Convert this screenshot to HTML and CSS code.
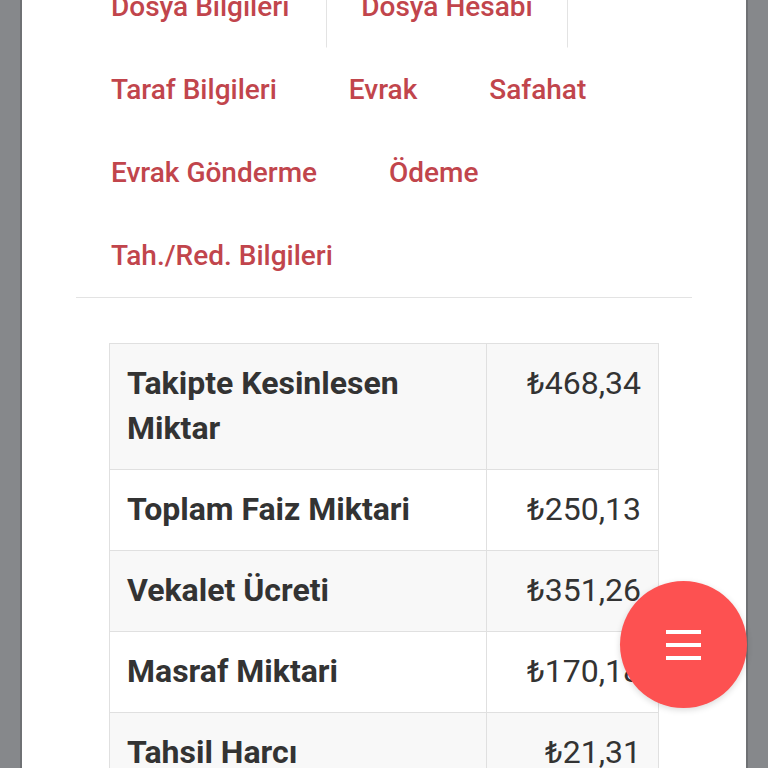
FILE: index.html
```html
<!DOCTYPE html>
<html lang="tr">
<head>
<meta charset="UTF-8">
<meta name="viewport" content="width=device-width, initial-scale=1.0">
<title>Dosya Hesabı</title>
<link rel="stylesheet" href="styles.css">
</head>
<body>

<div class="panel">
  <!-- Sekmeler -->
  <ul class="nav-tabs">
    <li><a href="#" class="nav-link">Dosya Bilgileri</a></li>
    <li><a href="#" class="nav-link active">Dosya Hesabı</a></li>
    <li><a href="#" class="nav-link">Taraf Bilgileri</a></li>
    <li><a href="#" class="nav-link">Evrak</a></li>
    <li><a href="#" class="nav-link">Safahat</a></li>
    <li><a href="#" class="nav-link">Evrak Gönderme</a></li>
    <li><a href="#" class="nav-link">Ödeme</a></li>
    <li><a href="#" class="nav-link">Tah./Red. Bilgileri</a></li>
  </ul>

  <div class="tab-content">
    <table class="hesap">
      <colgroup><col class="c-label"><col class="c-value"></colgroup>
      <tr><th>Takipte Kesinlesen Miktar</th><td>₺468,34</td></tr>
      <tr><th>Toplam Faiz Miktari</th><td>₺250,13</td></tr>
      <tr><th>Vekalet Ücreti</th><td>₺351,26</td></tr>
      <tr><th>Masraf Miktari</th><td>₺170,18</td></tr>
      <tr><th>Tahsil Harcı</th><td>₺21,31</td></tr>
      <tr><th>Toplam</th><td>₺1.261,22</td></tr>
    </table>
  </div>
</div>

<!-- Menü butonu -->
<button class="fab" aria-label="Menü">
  <svg width="35" height="30" viewBox="0 0 35 30">
    <rect x="0" y="0" width="35" height="4" fill="#fff"/>
    <rect x="0" y="13" width="35" height="4" fill="#fff"/>
    <rect x="0" y="26" width="35" height="4" fill="#fff"/>
  </svg>
</button>

</body>
</html>
```

FILE: styles.css
```css
html, body { margin:0; height:100%; overflow:hidden; }
body { background:#86888b; font-family:Roboto, "Liberation Sans", sans-serif; color:#333; }

.panel {
  width:724px; margin:-35px auto 0; padding:0 54px 40px;
  box-sizing:border-box; background:#fff; min-height:900px;
  box-shadow:0 0 0 2px #6f7174;
}

/* Sekmeler */
.nav-tabs {
  display:flex; flex-wrap:wrap; list-style:none;
  margin:0; padding:0; border-bottom:1px solid #e3e3e3;
}
.nav-link {
  display:block; padding:17px 34px; margin-right:2px;
  font-size:28px; font-weight:500; line-height:47px;
  color:#c1454c; text-decoration:none;
  border:1px solid transparent;
}
.nav-link.active { border-color:#e3e3e3 #e3e3e3 #fff; }

.tab-content { padding:45px 33px 0; }

/* Hesap tablosu */
.hesap {
  width:100%; table-layout:fixed;
  border-collapse:collapse; border:1px solid #e0e0e0;
}
.c-label { width:377px; }
.hesap th, .hesap td {
  padding:17px 17px 18px; border:1px solid #e0e0e0;
  font-size:32px; line-height:45px; vertical-align:top; color:#333;
}
.hesap th { text-align:left; font-weight:700; }
.hesap td { text-align:right; font-weight:400; white-space:nowrap; }
.hesap tr:nth-child(odd) { background:#f8f8f8; }

.fab {
  position:fixed; right:21px; bottom:60px;
  width:127px; height:127px; border-radius:50%; border:none;
  background:#fd5151; cursor:pointer;
  display:flex; align-items:center; justify-content:center;
  box-shadow:0 2px 6px rgba(0,0,0,.15);
}
```
